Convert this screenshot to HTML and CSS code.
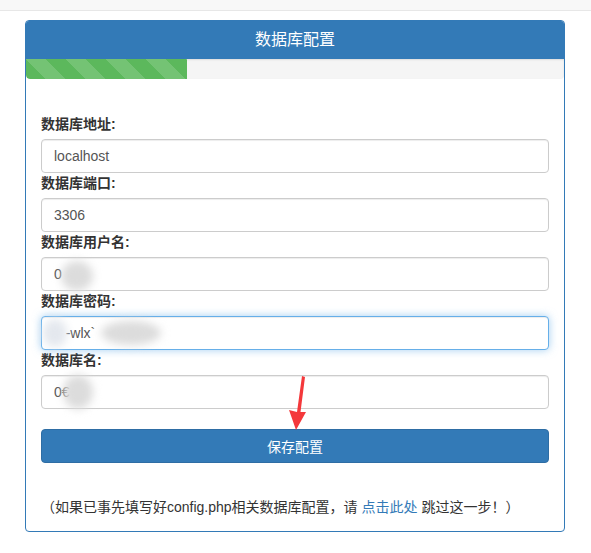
FILE: index.html
```html
<!DOCTYPE html>
<html>
<head>
<meta charset="utf-8">
<link rel="stylesheet" href="styles.css">
</head>
<body>
<div class="topbar"></div>
<div class="panel">
  <div class="panel-heading">数据库配置</div>
  <div class="progress"><div class="progress-bar" style="width:30%"></div></div>
  <div class="panel-body">
    <div class="group">
      <label>数据库地址:</label>
      <div class="field"><input class="input" value="localhost"></div>
    </div>
    <div class="group">
      <label>数据库端口:</label>
      <div class="field"><input class="input" value="3306"></div>
    </div>
    <div class="group">
      <label>数据库用户名:</label>
      <div class="field"><input class="input" value="0"><span class="smudge s1"></span></div>
    </div>
    <div class="group">
      <label>数据库密码:</label>
      <div class="field"><input class="input focus" value="   -wlx`"><span class="smudge s2"></span><span class="smudge s3"></span></div>
    </div>
    <div class="group">
      <label>数据库名:</label>
      <div class="field"><input class="input" value="0€"><span class="smudge s4"></span></div>
    </div>
    <button class="btn">保存配置</button>
    <p class="note">（如果已事先填写好<span class="latin">config.php</span>相关数据库配置，请 <a href="#">点击此处</a> 跳过这一步！）</p>
  </div>
  <svg class="arrow" width="30" height="60" viewBox="0 0 30 60">
    <polygon points="21,4 24,5 19.5,40 25,40 15,58 8,38 16,40" fill="#f4383b"/>
  </svg>
</div>
</body>
</html>
```
FILE: styles.css
```css
html, body {
  margin: 0;
  padding: 0;
  background: #fff;
  font-family: "Liberation Sans", "Noto Sans CJK SC", sans-serif;
  font-size: 14px;
  color: #333;
}
.topbar {
  height: 10px;
  background: #f8f8f8;
  border-bottom: 1px solid #e7e7e7;
}
.panel {
  position: relative;
  width: 538px;
  margin: 9px 0 0 25px;
  border: 1px solid #337ab7;
  border-radius: 4px;
  overflow: hidden;
}
.panel-heading {
  height: 38px;
  line-height: 38px;
  background: #337ab7;
  color: #fff;
  text-align: center;
  font-size: 16px;
}
.progress {
  height: 20px;
  background: #f5f5f5;
  border-radius: 0 0 4px 4px;
  overflow: hidden;
  box-shadow: inset 0 1px 2px rgba(0,0,0,.1);
}
.progress-bar {
  height: 100%;
  background-color: #5cb85c;
  background-image: linear-gradient(45deg, rgba(255,255,255,.15) 25%, transparent 25%, transparent 50%, rgba(255,255,255,.15) 50%, rgba(255,255,255,.15) 75%, transparent 75%, transparent);
  background-size: 40px 40px;
  border-radius: 0 0 0 4px;
}
.panel-body {
  padding: 35px 15px 14px;
}
.group label {
  display: block;
  font-weight: bold;
  line-height: 20px;
  margin-bottom: 5px;
}
.field {
  position: relative;
}
.input {
  display: block;
  box-sizing: border-box;
  width: 100%;
  height: 34px;
  padding: 6px 12px;
  font: 14px "Liberation Sans", "Noto Sans CJK SC", sans-serif;
  color: #555;
  border: 1px solid #ccc;
  border-radius: 4px;
  box-shadow: inset 0 1px 1px rgba(0,0,0,.075);
  outline: none;
  background: #fff;
}
.input.focus {
  border-color: #66afe9;
  box-shadow: inset 0 1px 1px rgba(0,0,0,.075), 0 0 8px rgba(102,175,233,.6);
}
.smudge {
  position: absolute;
  background: #dcdcdc;
  filter: blur(4px);
  border-radius: 50%;
}
.s1 { left: 20px; top: 4px; width: 32px; height: 30px; }
.s2 { left: 2px; top: 3px; width: 24px; height: 28px; background: #e4e8ee; }
.s3 { left: 60px; top: 5px; width: 60px; height: 24px; }
.s4 { left: 22px; top: 0; width: 30px; height: 34px; }
.btn {
  display: block;
  width: 100%;
  height: 34px;
  margin-top: 20px;
  background: #337ab7;
  border: 1px solid #2e6da4;
  border-radius: 4px;
  color: #fff;
  font: 14px "Liberation Sans", "Noto Sans CJK SC", sans-serif;
}
.note {
  margin: 34px 0 0;
  line-height: 20px;
  font-size: 14px;
}
.note a {
  color: #337ab7;
  text-decoration: none;
}
.arrow {
  position: absolute;
  left: 255px;
  top: 351px;
}
```
